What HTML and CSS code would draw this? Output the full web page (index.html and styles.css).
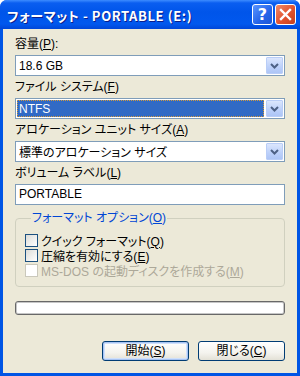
FILE: index.html
```html
<!DOCTYPE html>
<html lang="ja">
<head>
    <meta charset="UTF-8">
    <title>フォーマット - PORTABLE (E:)</title>
    <link rel="stylesheet" href="styles.css">
</head>
<body>
    <div class="window">
        <div class="titlebar">
            <span class="title">フォーマット - PORTABLE (E:)</span>
            <div class="title-buttons">
                <span class="tbtn help">?</span>
                <span class="tbtn close">
                    <svg width="13" height="13" viewBox="0 0 13 13"><path d="M2 2 L11 11 M11 2 L2 11" stroke="#fff" stroke-width="2.4" stroke-linecap="square"/></svg>
                </span>
            </div>
        </div>
        <div class="content">
            <div class="field">
                <label>容量(<u>P</u>):</label>
                <div class="combo">
                    <span class="value">18.6 GB</span>
                    <span class="drop"><svg width="9" height="6" viewBox="0 0 9 6"><path d="M1 1 L4.5 4.5 L8 1" stroke="#4d6185" stroke-width="2" fill="none"/></svg></span>
                </div>
            </div>
            <div class="field">
                <label>ファイル システム(<u>F</u>)</label>
                <div class="combo">
                    <span class="value selected">NTFS</span>
                    <span class="drop"><svg width="9" height="6" viewBox="0 0 9 6"><path d="M1 1 L4.5 4.5 L8 1" stroke="#4d6185" stroke-width="2" fill="none"/></svg></span>
                </div>
            </div>
            <div class="field">
                <label>アロケーション ユニット サイズ(<u>A</u>)</label>
                <div class="combo">
                    <span class="value">標準のアロケーション サイズ</span>
                    <span class="drop"><svg width="9" height="6" viewBox="0 0 9 6"><path d="M1 1 L4.5 4.5 L8 1" stroke="#4d6185" stroke-width="2" fill="none"/></svg></span>
                </div>
            </div>
            <div class="field">
                <label>ボリューム ラベル(<u>L</u>)</label>
                <div class="textbox">PORTABLE</div>
            </div>
            <fieldset class="group">
                <legend>フォーマット オプション(<u>O</u>)</legend>
                <div class="check"><span class="box"></span><span>クイック フォーマット(<u>Q</u>)</span></div>
                <div class="check"><span class="box"></span><span>圧縮を有効にする(<u>E</u>)</span></div>
                <div class="check disabled"><span class="box"></span><span>MS-DOS の起動ディスクを作成する(<u>M</u>)</span></div>
            </fieldset>
            <div class="progress"></div>
            <div class="actions">
                <span class="btn default">開始(<u>S</u>)</span>
                <span class="btn">閉じる(<u>C</u>)</span>
            </div>
        </div>
    </div>
</body>
</html>
```

FILE: styles.css
```css
body {
    margin: 0;
    font-family: "Liberation Sans", "Noto Sans CJK JP", sans-serif;
    font-size: 12px;
    color: #000;
    background-color: #fff;
}

.window {
    width: 300px;
    height: 376px;
    display: flex;
    flex-direction: column;
    background-color: #0055e5;
    border-radius: 7px 7px 0 0;
    overflow: hidden;
}

.titlebar {
    height: 29px;
    flex-shrink: 0;
    display: flex;
    align-items: center;
    justify-content: space-between;
    padding: 0 4px 0 7px;
    background: linear-gradient(#3d8cff 0, #0a5ef0 3px, #0055ea 12px, #0158ee 24px, #0046d8 29px);
}

.title {
    color: #fff;
    font-family: "Noto Sans CJK JP", sans-serif;
    font-weight: bold;
    font-size: 13px;
    font-feature-settings: "palt";
    letter-spacing: 0.6px;
    text-shadow: 1px 1px 0 #0a1e8c;
    margin-top: 1px;
}

.title-buttons {
    display: flex;
    gap: 2px;
}

.tbtn {
    width: 19px;
    height: 19px;
    border: 1px solid #fff;
    border-radius: 3px;
    display: flex;
    align-items: center;
    justify-content: center;
    color: #fff;
}

.help {
    background: linear-gradient(135deg, #5a95ff, #2463e8 60%, #1d56d6);
    font-family: "DejaVu Sans", sans-serif;
    font-weight: bold;
    font-size: 16px;
}

.close {
    background: linear-gradient(135deg, #f08a68, #e2532f 55%, #c7401e);
}

.content {
    flex: 1;
    display: flex;
    flex-direction: column;
    background-color: #ece9d8;
    margin: 0 3px 3px 3px;
    padding: 8px 12px 12px 12px;
    font-feature-settings: "palt";
}

.field {
    display: flex;
    flex-direction: column;
    gap: 4px;
    margin-bottom: 4px;
}

.field label {
    height: 14px;
    line-height: 14px;
}

.combo,
.textbox {
    height: 21px;
    box-sizing: border-box;
    border: 1px solid #7f9db9;
    background-color: #fff;
}

.combo {
    display: flex;
    align-items: stretch;
    padding: 1px;
}

.combo .value {
    flex: 1;
    display: flex;
    align-items: center;
    padding-left: 2px;
    margin-right: 2px;
}

.combo .value.selected {
    background-color: #316ac5;
    color: #fff;
    outline: 1px dotted #d49a3c;
    outline-offset: -1px;
}

.drop {
    width: 15px;
    border: 1px solid #b9cdf7;
    border-radius: 1px;
    background: linear-gradient(#dbe6fd, #bcd0fa 60%, #adc5f6);
    display: flex;
    align-items: center;
    justify-content: center;
}

.textbox {
    line-height: 19px;
    padding-left: 3px;
}

.group {
    margin: 2px 0 0 0;
    padding: 8px 8px 8px 9px;
    border: 1px solid #d0d0bf;
    border-radius: 4px;
    display: flex;
    flex-direction: column;
}

.group legend {
    color: #0046d5;
    padding: 0 1px;
    margin-left: 6px;
    line-height: 14px;
}

.check {
    display: flex;
    align-items: center;
    gap: 3px;
    height: 15px;
}

.check .box {
    width: 11px;
    height: 11px;
    border: 1px solid #1c5180;
    background: linear-gradient(135deg, #dcdcd7, #fff);
}

.check.disabled {
    color: #aca899;
}

.check.disabled .box {
    border-color: #cac8bb;
    background: #fff;
}

.progress {
    margin-top: 14px;
    height: 14px;
    box-sizing: border-box;
    border: 1px solid #686868;
    border-radius: 3px;
    background-color: #fff;
    box-shadow: inset 0 0 0 1px #c6c6c6;
}

.actions {
    margin-top: auto;
    display: flex;
    justify-content: flex-end;
    gap: 9px;
}

.btn {
    width: 85px;
    height: 18px;
    line-height: 18px;
    text-align: center;
    border: 1px solid #003c74;
    border-radius: 3px;
    background: linear-gradient(#fff, #f4f3ee 60%, #e3e1d6);
}

.btn.default {
    box-shadow: inset 0 0 0 1px #a7c3f3, inset 0 0 0 2px #cfe0fb;
}
```
